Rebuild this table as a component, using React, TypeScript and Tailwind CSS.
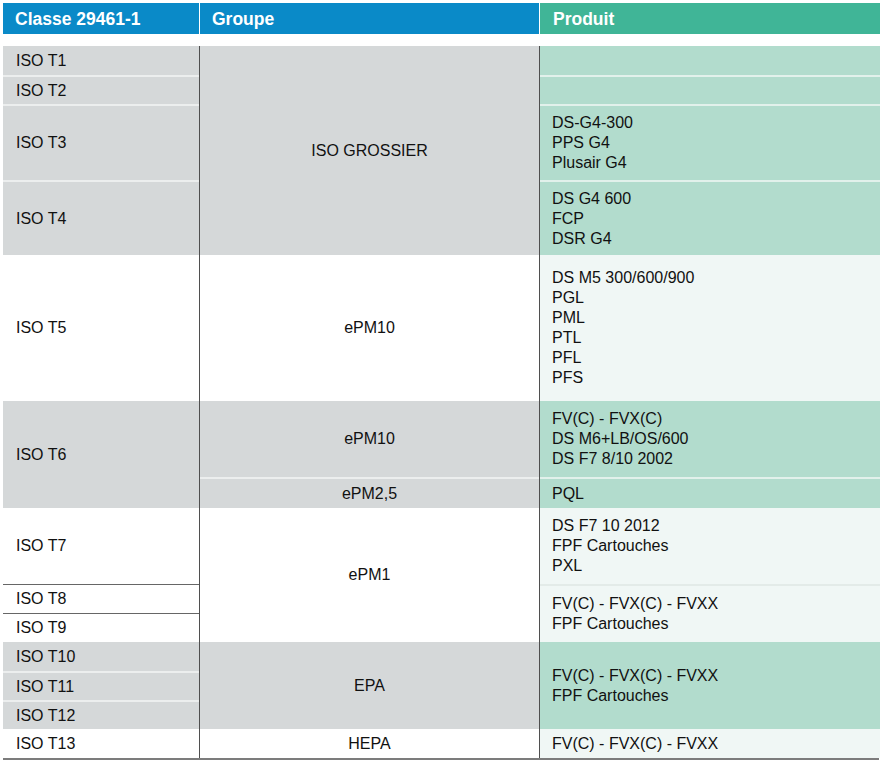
import React from "react";

const GRAY = "bg-[#d5d8d9]";
const MINT = "bg-[#b2dccd]";
const LIGHT = "bg-[#f0f7f5]";

function Lines({ items }: { items: string[] }) {
  return (
    <div className="flex flex-col">
      {items.map((t, i) => (
        <span key={i} className="leading-[20px]">
          {t}
        </span>
      ))}
    </div>
  );
}

export default function App() {
  const c1 = "flex items-center pl-[13px]";
  const c2 = "flex items-center justify-center";
  const c3 = "flex items-center pl-[12px]";
  return (
    <div className="w-[885px] h-[764px] bg-white pt-[3px] pl-[3px] font-['Liberation_Sans',Arial,sans-serif] text-[16px] text-[#111111]">
      <div className="grid grid-cols-[196px_339px_340px] gap-x-px h-[31px] text-white font-bold text-[17.5px]">
        <div className="bg-[#0a8ac8] flex items-center pl-[12px] pt-[2px]">Classe 29461-1</div>
        <div className="bg-[#0a8ac8] flex items-center pl-[12px] pt-[2px]">Groupe</div>
        <div className="bg-[#40b597] flex items-center pl-[13px] pt-[2px]">Produit</div>
      </div>

      <div className="mt-[12px] w-[876px] border-b-2 border-[#7c7c7c]">
        <div className="grid grid-cols-[196px_339px_340px] gap-x-px bg-[#4f4f4f] grid-rows-[29px_29px_76px_75px_146px_76px_31px_76px_29px_29px_29px_29px_29px_29px]">
          {/* Column 1 */}
          <div className={`${c1} ${GRAY} col-start-1 row-start-1`}>ISO T1</div>
          <div className={`${c1} ${GRAY} col-start-1 row-start-2 border-t-2 border-[#eceeee]`}>ISO T2</div>
          <div className={`${c1} ${GRAY} col-start-1 row-start-3 border-t-2 border-[#eceeee]`}>ISO T3</div>
          <div className={`${c1} ${GRAY} col-start-1 row-start-4 border-t-2 border-[#eceeee]`}>ISO T4</div>
          <div className={`${c1} bg-white col-start-1 row-start-5`}>ISO T5</div>
          <div className={`${c1} ${GRAY} col-start-1 row-start-6 row-span-2`}>ISO T6</div>
          <div className={`${c1} bg-white col-start-1 row-start-8`}>ISO T7</div>
          <div className={`${c1} bg-white col-start-1 row-start-9 border-t border-[#666]`}>ISO T8</div>
          <div className={`${c1} bg-white col-start-1 row-start-10 border-t border-[#666]`}>ISO T9</div>
          <div className={`${c1} ${GRAY} col-start-1 row-start-11`}>ISO T10</div>
          <div className={`${c1} ${GRAY} col-start-1 row-start-12 border-t-2 border-[#eceeee]`}>ISO T11</div>
          <div className={`${c1} ${GRAY} col-start-1 row-start-13 border-t-2 border-[#eceeee]`}>ISO T12</div>
          <div className={`${c1} bg-white col-start-1 row-start-14`}>ISO T13</div>

          {/* Column 2 */}
          <div className={`${c2} ${GRAY} col-start-2 row-start-1 row-span-4`}>ISO GROSSIER</div>
          <div className={`${c2} bg-white col-start-2 row-start-5`}>ePM10</div>
          <div className={`${c2} ${GRAY} col-start-2 row-start-6`}>ePM10</div>
          <div className={`${c2} ${GRAY} col-start-2 row-start-7 border-t-2 border-[#eceeee]`}>ePM2,5</div>
          <div className={`${c2} bg-white col-start-2 row-start-8 row-span-3`}>ePM1</div>
          <div className={`${c2} ${GRAY} col-start-2 row-start-11 row-span-3`}>EPA</div>
          <div className={`${c2} bg-white col-start-2 row-start-14`}>HEPA</div>

          {/* Column 3 */}
          <div className={`${c3} ${MINT} col-start-3 row-start-1`}></div>
          <div className={`${c3} ${MINT} col-start-3 row-start-2 border-t-2 border-[#e2f1eb]`}></div>
          <div className={`${c3} ${MINT} col-start-3 row-start-3 border-t-2 border-[#e2f1eb]`}>
            <Lines items={["DS-G4-300", "PPS G4", "Plusair G4"]} />
          </div>
          <div className={`${c3} ${MINT} col-start-3 row-start-4 border-t-2 border-[#e2f1eb]`}>
            <Lines items={["DS G4 600", "FCP", "DSR G4"]} />
          </div>
          <div className={`${c3} ${LIGHT} col-start-3 row-start-5`}>
            <Lines items={["DS M5 300/600/900", "PGL", "PML", "PTL", "PFL", "PFS"]} />
          </div>
          <div className={`${c3} ${MINT} col-start-3 row-start-6`}>
            <Lines items={["FV(C) - FVX(C)", "DS M6+LB/OS/600", "DS F7 8/10 2002"]} />
          </div>
          <div className={`${c3} ${MINT} col-start-3 row-start-7 border-t-2 border-[#e2f1eb]`}>PQL</div>
          <div className={`${c3} ${LIGHT} col-start-3 row-start-8`}>
            <Lines items={["DS F7 10 2012", "FPF Cartouches", "PXL"]} />
          </div>
          <div className={`${c3} ${LIGHT} col-start-3 row-start-9 row-span-2 border-t-2 border-[#e3ebe8]`}>
            <Lines items={["FV(C) - FVX(C) - FVXX", "FPF Cartouches"]} />
          </div>
          <div className={`${c3} ${MINT} col-start-3 row-start-11 row-span-3`}>
            <Lines items={["FV(C) - FVX(C) - FVXX", "FPF Cartouches"]} />
          </div>
          <div className={`${c3} ${LIGHT} col-start-3 row-start-14`}>FV(C) - FVX(C) - FVXX</div>
        </div>
      </div>
    </div>
  );
}
